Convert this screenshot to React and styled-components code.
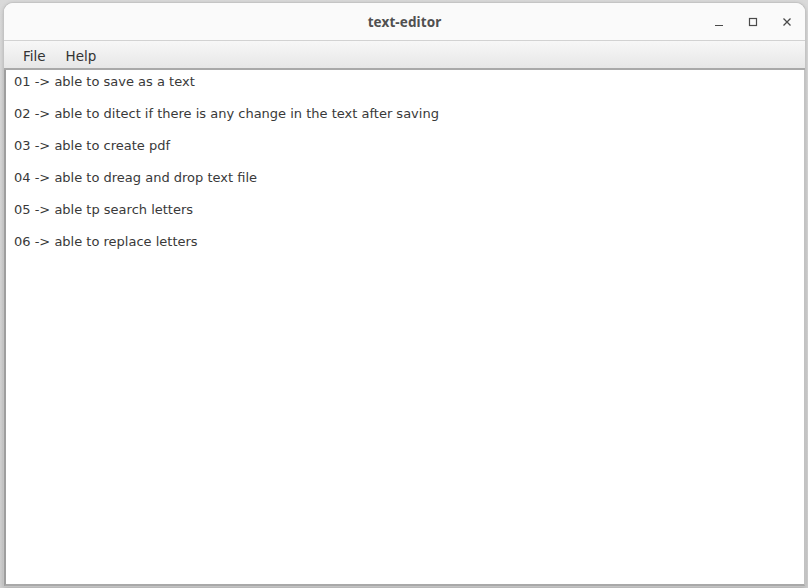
import styled, { createGlobalStyle } from "styled-components";

const GlobalStyle = createGlobalStyle`
  html, body {
    margin: 0;
    padding: 0;
  }
  body {
    width: 808px;
    height: 588px;
    overflow: hidden;
    background: linear-gradient(#d9d9d9, #cfcfcf);
  }
`;

const items = [
  "01 -> able to save as a text",
  "02 -> able to ditect if there is any change in the text after saving",
  "03 -> able to create pdf",
  "04 -> able to dreag and drop text file",
  "05 -> able tp search letters",
  "06 -> able to replace letters",
];

export default function App() {
  return (
    <>
      <GlobalStyle />
      <Screen>
        <Window>
          <TitleBar>
            <Title>text-editor</Title>
            <Controls>
              <Control aria-label="minimize">
                <svg width="10" height="10" viewBox="0 0 10 10">
                  <path d="M1 8.5h8" stroke="#4a4a4a" strokeWidth="1.2" />
                </svg>
              </Control>
              <Control aria-label="maximize">
                <svg width="10" height="10" viewBox="0 0 10 10">
                  <rect x="1.5" y="1.5" width="7" height="7" fill="none" stroke="#4a4a4a" strokeWidth="1.2" />
                </svg>
              </Control>
              <Control aria-label="close">
                <svg width="10" height="10" viewBox="0 0 10 10">
                  <path d="M1.5 1.5l7 7M8.5 1.5l-7 7" stroke="#4a4a4a" strokeWidth="1.3" />
                </svg>
              </Control>
            </Controls>
          </TitleBar>

          <MenuBar>
            <MenuItem>File</MenuItem>
            <MenuItem>Help</MenuItem>
          </MenuBar>

          <Editor>
            {items.map((line) => (
              <Line key={line}>{line}</Line>
            ))}
          </Editor>
        </Window>
      </Screen>
    </>
  );
}

const Screen = styled.div`
  width: 808px;
  height: 588px;
  padding: 3px 3px 2px 4px;
  box-sizing: border-box;
  display: flex;
`;

const Window = styled.div`
  flex: 1;
  display: flex;
  flex-direction: column;
  background: #fafafa;
  border-radius: 9px 9px 0 0;
  box-shadow: 0 0 0 1px #c4c4c4, 0 1px 4px rgba(0, 0, 0, 0.25);
  overflow: hidden;
`;

const TitleBar = styled.div`
  height: 37px;
  flex-shrink: 0;
  position: relative;
  display: flex;
  align-items: center;
  justify-content: center;
  background: #fafafa;
  border-bottom: 1px solid #d2d2d2;
`;

const Title = styled.span`
  font-family: "Noto Sans", "DejaVu Sans", sans-serif;
  font-weight: 700;
  font-size: 13.5px;
  color: #505050;
  letter-spacing: 0.1px;
`;

const Controls = styled.div`
  position: absolute;
  right: 8px;
  top: 0;
  height: 100%;
  display: flex;
  align-items: center;
  gap: 14px;
`;

const Control = styled.div`
  width: 20px;
  height: 20px;
  display: flex;
  align-items: center;
  justify-content: center;
`;

const MenuBar = styled.div`
  height: 27px;
  flex-shrink: 0;
  display: flex;
  align-items: center;
  padding-left: 9px;
  background: linear-gradient(#f7f7f7, #e7e7e7);
  border-bottom: 2px solid #a9a9a9;
`;

const MenuItem = styled.span`
  font-family: "DejaVu Sans", sans-serif;
  font-size: 13.5px;
  color: #333;
  padding: 3px 10px 0;
`;

const Editor = styled.div`
  flex: 1;
  background: #fff;
  border-left: 2px solid #9e9e9e;
  border-right: 1px solid #c2c2c2;
  border-bottom: 2px solid #a9a9a9;
  padding: 4px 8px 3px;
`;

const Line = styled.div`
  font-family: "DejaVu Sans", sans-serif;
  font-size: 13px;
  line-height: 16px;
  color: #393939;
  margin-bottom: 16px;
`;
